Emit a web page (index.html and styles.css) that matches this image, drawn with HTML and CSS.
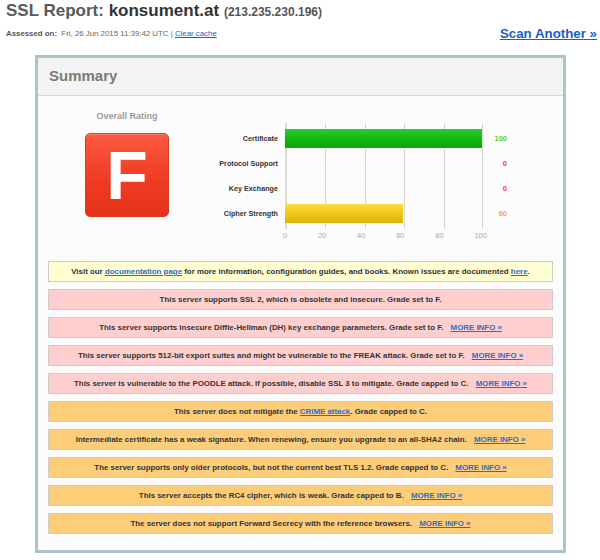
FILE: index.html
```html
<!DOCTYPE html>
<html>
<head>
<meta charset="utf-8">
<link rel="stylesheet" href="styles.css">
</head>
<body>
<div class="top">
  <div class="title-block">
    <h1 class="title">SSL Report: <span class="host">konsument.at</span> <span class="ip">(213.235.230.196)</span></h1>
    <div class="assessed"><b>Assessed on:</b>&nbsp; Fri, 26 Jun 2015 11:39:42 UTC | <a href="#">Clear cache</a></div>
  </div>
  <a class="scan" href="#">Scan Another »</a>
</div>

<div class="report">
  <div class="report-head">Summary</div>
  <div class="report-body">
    <div class="overview">
      <div class="rating">
        <div class="rating-title">Overall Rating</div>
        <div class="grade">F</div>
      </div>
      <div class="chart">
        <div class="plot"></div>
        <div class="label r1">Certificate</div>
        <div class="bar green r1" style="width:197px"></div>
        <div class="val green-t r1">100</div>
        <div class="label r2">Protocol Support</div>
        <div class="val red-t r2">0</div>
        <div class="label r3">Key Exchange</div>
        <div class="val red-t r3">0</div>
        <div class="label r4">Cipher Strength</div>
        <div class="bar yellow r4" style="width:118px"></div>
        <div class="val orange-t r4">60</div>
        <div class="axis">
          <span>0</span><span>20</span><span>40</span><span>60</span><span>80</span><span>100</span>
        </div>
      </div>
    </div>

    <div class="msgs">
      <div class="msg info">Visit our <a href="#">documentation page</a> for more information, configuration guides, and books. Known issues are documented <a href="#">here</a>.</div>
      <div class="msg err">This server supports SSL 2, which is obsolete and insecure. Grade set to F.</div>
      <div class="msg err">This server supports insecure Diffie-Hellman (DH) key exchange parameters. Grade set to F. <a class="more" href="#">MORE INFO »</a></div>
      <div class="msg err">This server supports 512-bit export suites and might be vulnerable to the FREAK attack. Grade set to F. <a class="more" href="#">MORE INFO »</a></div>
      <div class="msg err">This server is vulnerable to the POODLE attack. If possible, disable SSL 3 to mitigate. Grade capped to C. <a class="more" href="#">MORE INFO »</a></div>
      <div class="msg warn">This server does not mitigate the <a href="#">CRIME attack</a>. Grade capped to C.</div>
      <div class="msg warn">Intermediate certificate has a weak signature. When renewing, ensure you upgrade to an all-SHA2 chain. <a class="more" href="#">MORE INFO »</a></div>
      <div class="msg warn">The server supports only older protocols, but not the current best TLS 1.2. Grade capped to C. <a class="more" href="#">MORE INFO »</a></div>
      <div class="msg warn">This server accepts the RC4 cipher, which is weak. Grade capped to B. <a class="more" href="#">MORE INFO »</a></div>
      <div class="msg warn">The server does not support Forward Secrecy with the reference browsers. <a class="more" href="#">MORE INFO »</a></div>
    </div>
  </div>
</div>
</body>
</html>
```
FILE: styles.css
```css
* { box-sizing: border-box; }
html, body { margin: 0; padding: 0; background: #fff; }
body {
  font-family: "Liberation Sans", Arial, sans-serif;
  color: #333;
  width: 600px;
  height: 560px;
  overflow: hidden;
}
a { color: #1a5fc4; }

.top {
  height: 55px;
  display: flex;
  justify-content: space-between;
  align-items: flex-start;
  padding: 1px 3px 0 6px;
}
.title {
  margin: 0;
  font-size: 17px;
  line-height: 20px;
  font-weight: bold;
  color: #5a5a5a;
}
.title .host { color: #333; }
.title .ip { font-size: 12px; line-height: 1; color: #555; }
.assessed {
  margin-top: 8px;
  font-size: 7.85px;
  line-height: 10px;
  color: #666;
}
.assessed b { color: #555; }
.scan {
  margin-top: 25px;
  font-size: 13.3px;
  font-weight: bold;
  color: #1a5fc4;
  line-height: 16px;
}

.report {
  width: 531px;
  height: 498px;
  margin-left: 35px;
  border: 3px solid #a8c6c8;
  background: #fcfcfc;
}
.report-head {
  height: 38px;
  background: #f3f3f3;
  border-bottom: 1px solid #cfdcdc;
  padding: 9px 0 0 11px;
  font-size: 15px;
  line-height: 18px;
  font-weight: bold;
  color: #7a7a7a;
}
.report-body { padding: 0 10px; }

.overview {
  display: flex;
  height: 165px;
}
.rating {
  width: 158px;
  display: flex;
  flex-direction: column;
  align-items: center;
  padding-top: 14px;
}
.rating-title {
  font-size: 9px;
  font-weight: bold;
  color: #999;
  line-height: 12px;
}
.grade {
  margin-top: 11px;
  width: 84px;
  height: 84px;
  border-radius: 5px;
  border: 1px solid #d53a22;
  background: linear-gradient(#fb5a40, #ee3a22 60%, #e43319);
  color: #fff;
  font-size: 68px;
  font-weight: bold;
  line-height: 82px;
  text-align: center;
  box-shadow: inset 0 1px 0 rgba(255,255,255,0.25);
}

.chart {
  display: grid;
  grid-template-columns: 79px 198px 25px;
  grid-template-rows: 3px repeat(4, 25px) 3px auto;
  margin-top: 27px;
  height: 125px;
}
.plot {
  grid-column: 2;
  grid-row: 1 / 7;
  background: repeating-linear-gradient(to right, #d6d6d6 0 1px, transparent 1px 39.4px);
  border-left: 1.5px solid #ddd;
  border-right: 1px solid #d6d6d6;
}
.label {
  grid-column: 1;
  justify-self: end;
  align-self: center;
  margin-right: 7px;
  font-size: 7.2px;
  font-weight: bold;
  color: #333;
  white-space: nowrap;
}
.r1 { grid-row: 2; }
.r2 { grid-row: 3; }
.r3 { grid-row: 4; }
.r4 { grid-row: 5; }
.bar {
  grid-column: 2;
  align-self: center;
  height: 19px;
}
.green { background: linear-gradient(#2ccf2c, #12bb12 45%, #0aa80a); }
.yellow { background: linear-gradient(#fbe040, #f0c81c 45%, #dcb208); }
.val {
  grid-column: 3;
  justify-self: end;
  align-self: center;
  margin-right: 1px;
  font-size: 7.5px;
  font-weight: bold;
}
.green-t { color: #5cd02a; }
.red-t { color: #ff3a3a; }
.orange-t { color: #f8a830; }
.axis {
  grid-column: 2;
  grid-row: 7;
  display: flex;
  justify-content: space-between;
  margin: 2px -4px 0 -2px;
  font-size: 7.5px;
  line-height: 9px;
  color: #aaa;
}

.msgs {
  display: flex;
  flex-direction: column;
  gap: 7px;
}
.msg {
  height: 21px;
  border: 1px solid #cccccc;
  font-size: 7.9px;
  font-weight: bold;
  color: #333;
  text-align: center;
  line-height: 19px;
  white-space: nowrap;
}
.msg a { color: #2a6fcc; }
.msg .more { margin-left: 5px; }
.info { background: #fffdd2; }
.err { background: #ffcfcf; }
.warn { background: #fecd7a; }
```
